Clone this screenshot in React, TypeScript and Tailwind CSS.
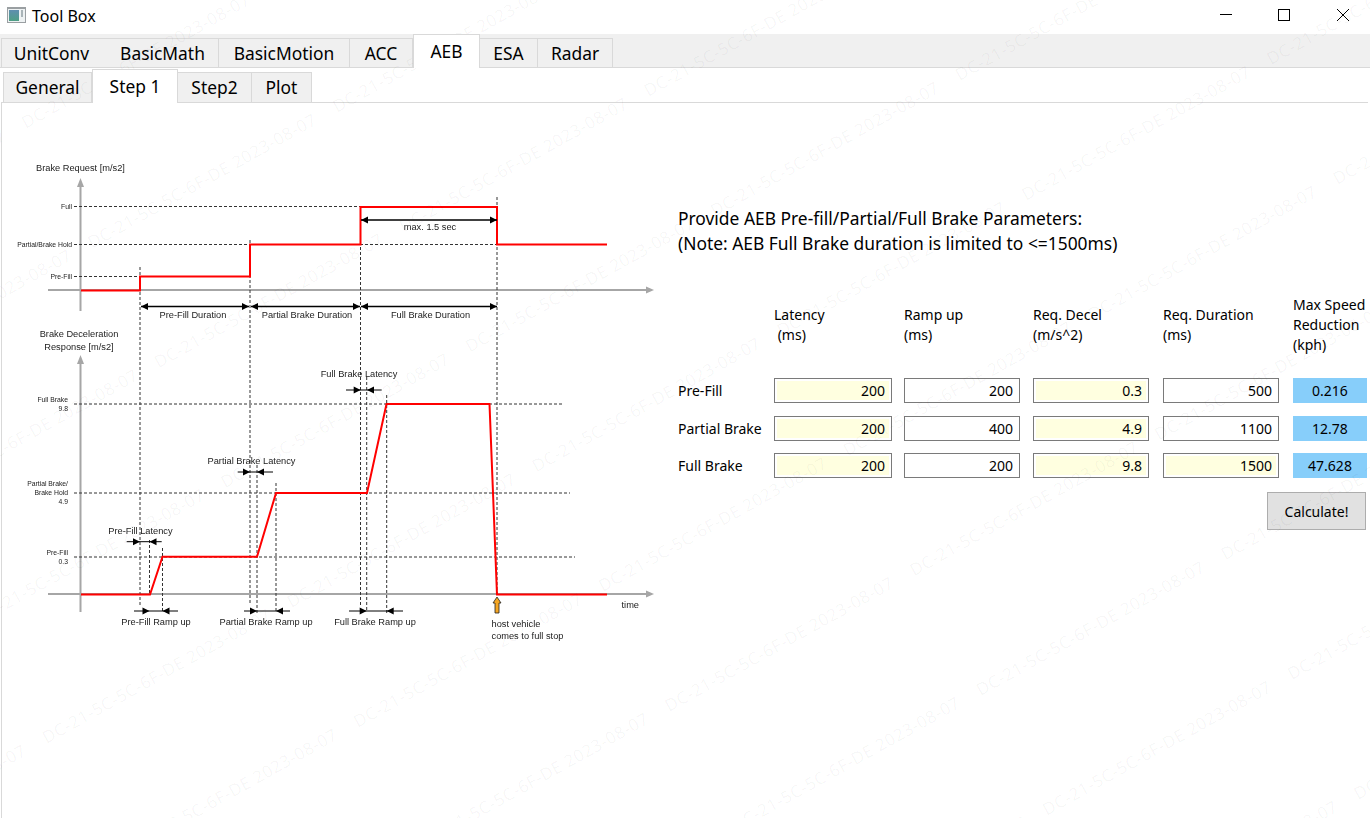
const FONT = { fontFamily: '"Noto Sans", sans-serif' };

const mainTabs = ["UnitConv", "BasicMath", "BasicMotion", "ACC", "AEB", "ESA", "Radar"];
const mainWidths = [106, 112, 131, 63, 67, 58, 75];
const subTabs = ["General", "Step 1", "Step2", "Plot"];
const subWidths = [89, 86, 74, 60];

const rows = [
  { name: "Pre-Fill", vals: [["200", 1], ["200", 0], ["0.3", 1], ["500", 0]], out: "0.216" },
  { name: "Partial Brake", vals: [["200", 1], ["400", 0], ["4.9", 1], ["1100", 0]], out: "12.78" },
  { name: "Full Brake", vals: [["200", 1], ["200", 0], ["9.8", 1], ["1500", 1]], out: "47.628" },
] as const;

function Dashed({ d }: { d: string }) {
  return <path d={d} fill="none" stroke="#333" strokeWidth="1" strokeDasharray="3 2" />;
}

// line with heads pointing at both ends, outward
function Span({ x1, x2, y }: { x1: number; x2: number; y: number }) {
  return (
    <g>
      <path d={`M${x1} ${y}H${x2}`} stroke="#000" strokeWidth="1.4" />
      <path d={`M${x1} ${y}l7 -3.5v7z`} fill="#000" />
      <path d={`M${x2} ${y}l-7 -3.5v7z`} fill="#000" />
    </g>
  );
}

// line with heads pointing inward at a and b
function Gap({ x1, x2, a, b, y }: { x1: number; x2: number; a: number; b: number; y: number }) {
  return (
    <g>
      <path d={`M${x1} ${y}H${x2}`} stroke="#000" strokeWidth="1" />
      <path d={`M${a} ${y}l-7 -3.5v7z`} fill="#000" />
      <path d={`M${b} ${y}l7 -3.5v7z`} fill="#000" />
    </g>
  );
}

function Diagram() {
  return (
    <svg width="670" height="520" viewBox="2 130 670 520" className="block shrink-0 blur-[0.4px]" style={{ fontFamily: '"Liberation Sans", sans-serif' }}>
      {/* axes */}
      <g stroke="#a6a6a6" strokeWidth="2" fill="none">
        <path d="M80.5 185V311M48 290H648" />
        <path d="M80.5 360V612M48 594H648" />
      </g>
      <g fill="#a6a6a6">
        <path d="M80.5 178l-3.5 9h7z" />
        <path d="M654 290l-8 -3.5v7z" />
        <path d="M80.5 355l-3.5 9h7z" />
        <path d="M654 594l-8 -3.5v7z" />
      </g>

      {/* guides */}
      <Dashed d="M74 206.5H360M74 244.5H250M360 244.5H497M74 276.5H140" />
      <Dashed d="M140 267V605M250 240V604M360.5 207V607M497 197V594" />
      <Dashed d="M74 404H563M74 493H570M74 557H575" />
      <Dashed d="M149.5 540V594M162.5 548V613M257 465V613M276 483V613M366.7 377V610M386.7 395V613" />

      {/* request and response traces */}
      <path d="M81 290.5H140V276.5H250V244.5H360.5V207H497V244.5H607" fill="none" stroke="#f00" strokeWidth="2" />
      <path d="M81 594.5H150L162.5 556.7H257L276 493H367L386.5 404H489.5L497 594.5H607" fill="none" stroke="#f00" strokeWidth="2" />

      <Span x1={141} x2={249} y={306.5} />
      <Span x1={251} x2={360} y={306.5} />
      <Span x1={361} x2={497} y={306.5} />
      <Span x1={361} x2={497} y={220} />

      <Gap x1={126.7} x2={161.7} a={140} b={149.5} y={541.7} />
      <Gap x1={237.7} x2={273} a={250} b={257} y={472} />
      <Gap x1={346} x2={381.7} a={360.7} b={367} y={390} />
      <Gap x1={134} x2={178} a={149.5} b={162.5} y={611} />
      <Gap x1={244} x2={290} a={257} b={276} y={611} />
      <Gap x1={349} x2={403} a={366.7} b={386.7} y={611} />

      {/* stop marker */}
      <path d="M497 597l4 6h-2v10h-4v-10h-2z" fill="#f5a623" stroke="#222" strokeWidth="0.8" />

      <g fontSize="9.25" fill="#222">
        <text x="36" y="171">Brake Request [m/s2]</text>
        <text x="79" y="337" textAnchor="middle">Brake Deceleration</text>
        <text x="79" y="350" textAnchor="middle">Response [m/s2]</text>
        <text x="193" y="318" textAnchor="middle">Pre-Fill Duration</text>
        <text x="307" y="318" textAnchor="middle">Partial Brake Duration</text>
        <text x="430.5" y="318" textAnchor="middle">Full Brake Duration</text>
        <text x="430" y="230" textAnchor="middle">max. 1.5 sec</text>
        <text x="140.5" y="534" textAnchor="middle">Pre-Fill Latency</text>
        <text x="251.5" y="464" textAnchor="middle">Partial Brake Latency</text>
        <text x="359" y="377" textAnchor="middle">Full Brake Latency</text>
        <text x="156" y="625" textAnchor="middle">Pre-Fill Ramp up</text>
        <text x="266" y="625" textAnchor="middle">Partial Brake Ramp up</text>
        <text x="375" y="625" textAnchor="middle">Full Brake Ramp up</text>
        <text x="621.5" y="608">time</text>
        <text x="491.5" y="627">host vehicle</text>
        <text x="491.5" y="639">comes to full stop</text>
      </g>

      <g fontSize="6.8" fill="#222" textAnchor="end">
        <text x="72" y="209">Full</text>
        <text x="72" y="247">Partial/Brake Hold</text>
        <text x="72" y="279">Pre-Fill</text>
        <text x="68" y="402">Full Brake</text>
        <text x="68" y="411">9.8</text>
        <text x="68" y="486">Partial Brake/</text>
        <text x="68" y="495">Brake Hold</text>
        <text x="68" y="504">4.9</text>
        <text x="68" y="555">Pre-Fill</text>
        <text x="68" y="564">0.3</text>
      </g>
    </svg>
  );
}

// cells that would land wholly off the page stay empty
function onPage(row: number, cell: number) {
  const along = cell * 280 + 130;
  const across = row * 137 + 10;
  const x = -917 + along * 0.875 + across * 0.485;
  const y = 161 - along * 0.485 + across * 0.875;
  return x > -120 && x < 1490 && y > -70 && y < 888;
}

function Watermark() {
  const lines = Array.from({ length: 14 });
  const cells = Array.from({ length: 9 });
  return (
    <div className="pointer-events-none absolute inset-0 overflow-hidden select-none">
      <div className="absolute left-[-917px] top-[161px] flex w-[2520px] origin-top-left rotate-[-29deg] flex-col gap-[113px]">
        {lines.map((_, i) => (
          <div key={i} className="flex h-[24px] whitespace-nowrap text-[17px] leading-[24px] tracking-[0.5px] text-[#000000]/[0.04]">
            {cells.map((_, j) => (
              <span key={j} className="w-[280px] shrink-0">
                {onPage(i, j) ? "DC-21-5C-5C-6F-DE 2023-08-07" : ""}
              </span>
            ))}
          </div>
        ))}
      </div>
    </div>
  );
}

export default function App() {
  return (
    <div className="relative flex h-[818px] w-[1370px] flex-col overflow-hidden bg-white text-black" style={FONT}>
      <div className="flex h-[34px] shrink-0 items-center">
        <svg width="19" height="16" viewBox="0 0 19 16" className="mb-[4px] ml-[7px] shrink-0">
          <defs>
            <linearGradient id="ico" x1="0" y1="0" x2="0" y2="1">
              <stop offset="0" stopColor="#5f8fb0" />
              <stop offset="1" stopColor="#4f9f85" />
            </linearGradient>
          </defs>
          <rect width="19" height="16" fill="#9a9fa2" />
          <rect x="1" y="2" width="17" height="13" fill="#eef2f3" />
          <rect x="2" y="3" width="10" height="11" fill="url(#ico)" />
          <rect x="14" y="3" width="2" height="7" fill="#a9b4b8" />
        </svg>
        <span className="mb-[2px] ml-[6px] text-[16px] leading-none">Tool Box</span>
        <div className="ml-auto flex items-center">
          <svg width="58" height="34" viewBox="0 0 58 34"><path d="M20 14.5H32" stroke="#000" strokeWidth="1" /></svg>
          <svg width="58" height="34" viewBox="0 0 58 34"><rect x="20.5" y="9.5" width="11" height="11" fill="none" stroke="#000" /></svg>
          <svg width="54" height="34" viewBox="0 0 54 34"><path d="M21 9l12 12M33 9L21 21" stroke="#000" strokeWidth="1" /></svg>
        </div>
      </div>

      <div className="flex h-[34px] shrink-0 items-end border-b border-[#d9d9d9] bg-[#f0f0f0] pl-px">
        {mainTabs.map((t, i) => (
          <div
            key={t}
            style={{ width: mainWidths[i] }}
            className={
              t === "AEB"
                ? "relative z-10 -mb-px flex h-[34px] items-center justify-center border-x border-t border-[#d9d9d9] bg-white pb-[1px] text-[17.4px]"
                : i === 0
                  ? "flex h-[29px] items-center justify-center border-t border-l border-[#d9d9d9] pr-[6px] text-[17.4px]"
                  : "flex h-[29px] items-center justify-center border-t border-r border-[#d9d9d9] text-[17.4px]"
            }
          >
            {t}
          </div>
        ))}
      </div>

      <div className="flex h-[34px] shrink-0 items-end bg-white pl-[3px]">
        {subTabs.map((t, i) => (
          <div
            key={t}
            style={{ width: subWidths[i] }}
            className={
              t === "Step 1"
                ? "relative z-10 -mb-px flex h-[34px] items-center justify-center border-x border-t border-[#d9d9d9] bg-white pb-[1px] text-[17.4px]"
                : "flex h-[30px] items-center justify-center border-t border-r border-[#d9d9d9] bg-[#f0f0f0] text-[17.4px] first:border-l"
            }
          >
            {t}
          </div>
        ))}
      </div>

      <div className="mr-[2px] ml-px flex min-h-0 flex-1 border-t border-l border-[#d9d9d9] pt-[27px]">
        <Diagram />
        <div className="flex flex-col pl-[6px]">
          <p className="mt-[76px] text-[17.4px] leading-[25px]">
            Provide AEB Pre-fill/Partial/Full Brake Parameters:
            <br />
            (Note: AEB Full Brake duration is limited to &lt;=1500ms)
          </p>
          <div className="mt-[39px] flex text-[14px] leading-[20px]">
            <div className="w-[96px] shrink-0" />
            <div className="flex w-[130px] shrink-0 flex-col justify-center">Latency<span>&nbsp;(ms)</span></div>
            <div className="flex w-[129px] shrink-0 flex-col justify-center">Ramp up<span>(ms)</span></div>
            <div className="flex w-[130px] shrink-0 flex-col justify-center">Req. Decel<span>(m/s^2)</span></div>
            <div className="flex w-[130px] shrink-0 flex-col justify-center">Req. Duration<span>(ms)</span></div>
            <div className="flex shrink-0 flex-col">Max Speed<span>Reduction</span><span>(kph)</span></div>
          </div>
          <div className="mt-[23px] flex flex-col gap-[12.5px] text-[14px]">
            {rows.map((r) => (
              <div key={r.name} className="flex h-[25px] items-center">
                <div className="w-[96px] shrink-0">{r.name}</div>
                {r.vals.map(([v, yellow], i) => (
                  <div
                    key={i}
                    className={
                      (i === 0 ? "mr-[12px] w-[118px] " : i === 1 ? "mr-[13px] w-[116px] " : "mr-[14px] w-[116px] ") +
                      "flex h-[25px] shrink-0 items-center justify-end border border-[#7a7a7a] bg-white p-[2px]"
                    }
                  >
                    <span className={(yellow ? "bg-[#ffffe0] " : "") + "flex h-full w-full items-center justify-end pr-[4px]"}>{v}</span>
                  </div>
                ))}
                <div className="flex h-[25px] w-[74px] shrink-0 items-center justify-center bg-[#87cefa]">{r.out}</div>
              </div>
            ))}
          </div>
          <div className="mt-[14px] flex justify-end pr-px">
            <button className="h-[38px] w-[99px] border border-[#adadad] bg-[#e1e1e1] text-[14px]">Calculate!</button>
          </div>
        </div>
      </div>

      <Watermark />
    </div>
  );
}
